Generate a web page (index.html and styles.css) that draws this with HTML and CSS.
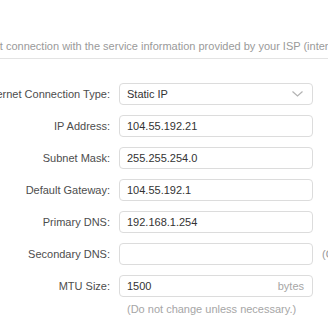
FILE: index.html
```html
<!DOCTYPE html>
<html lang="en">
<head>
    <meta charset="UTF-8">
    <meta name="viewport" content="width=device-width, initial-scale=1.0">
    <title>Internet</title>
    <link rel="stylesheet" href="styles.css">
</head>
<body>
    <!-- internet settings panel -->
    <div class="panel">
        <p class="panel-desc">Set up an internet connection with the service information provided by your ISP (internet service provider).</p>
        <div class="panel-line"></div>

        <form class="form">
            <div class="form-row">
                <label class="form-label">Internet Connection Type:</label>
                <div class="form-field select">
                    <span>Static IP</span>
                    <svg class="select-arrow" width="11" height="6" viewBox="0 0 11 6">
                        <polyline points="0.5,0.5 5.5,5 10.5,0.5" fill="none" stroke="#b3b3b3" stroke-width="1.2"/>
                    </svg>
                </div>
            </div>

            <div class="form-row">
                <label class="form-label">IP Address:</label>
                <div class="form-field">104.55.192.21</div>
            </div>

            <div class="form-row">
                <label class="form-label">Subnet Mask:</label>
                <div class="form-field">255.255.254.0</div>
            </div>

            <div class="form-row">
                <label class="form-label">Default Gateway:</label>
                <div class="form-field">104.55.192.1</div>
            </div>

            <div class="form-row">
                <label class="form-label">Primary DNS:</label>
                <div class="form-field">192.168.1.254</div>
            </div>

            <div class="form-row">
                <label class="form-label">Secondary DNS:</label>
                <div class="form-field"></div>
                <span class="form-extra">(Optional)</span>
            </div>

            <div class="form-row">
                <label class="form-label">MTU Size:</label>
                <div class="form-field">
                    <span>1500</span>
                    <span class="form-unit">bytes</span>
                </div>
            </div>

            <div class="form-hint">(Do not change unless necessary.)</div>
        </form>
    </div>
</body>
</html>
```

FILE: styles.css
```css
* {
    margin: 0;
    padding: 0;
    box-sizing: border-box;
}

body {
    font-family: "Liberation Sans", Arial, sans-serif;
    font-size: 11px;
    color: #333;
    background-color: white;
    overflow: hidden;
}

.panel {
    margin-left: -84px;
    width: 520px;
    padding-top: 37px;
}

.panel-desc {
    line-height: 18px;
    color: #9a9a9a;
    white-space: nowrap;
}

.panel-line {
    margin-top: 3px;
    border-top: 1px solid #e3e3e3;
}

.form {
    margin-top: 24px;
    display: flex;
    flex-direction: column;
    gap: 10px;
}

.form-row {
    display: grid;
    grid-template-columns: 194px 194px auto;
    column-gap: 9px;
    align-items: center;
}

.form-label {
    text-align: right;
    color: #4d4d4d;
    white-space: nowrap;
}

.form-field {
    height: 22px;
    border: 1px solid #dcdcdc;
    border-radius: 4px;
    padding: 0 8px 0 7px;
    display: flex;
    align-items: center;
    justify-content: space-between;
    color: #333;
}

.select-arrow {
    margin-right: 1px;
}

.form-unit {
    color: #a6a6a6;
}

.form-extra {
    color: #9a9a9a;
}

.form-hint {
    margin-top: -7px;
    padding-left: 211px;
    line-height: 18px;
    color: #a6a6a6;
}
```
